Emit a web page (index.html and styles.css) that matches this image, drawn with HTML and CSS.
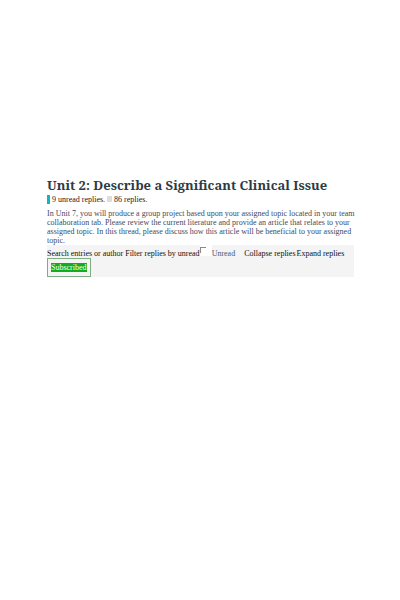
FILE: index.html
```html
<!DOCTYPE html>
<html lang="en">
<head>
    <meta charset="UTF-8">
    <meta name="viewport" content="width=device-width, initial-scale=1.0">
    <title>Unit 2: Describe a Significant Clinical Issue</title>
    <link rel="stylesheet" href="styles.css">
</head>
<body>
    <main class="discussion">
        <h1>Unit 2: Describe a Significant Clinical Issue</h1>
        <div class="reply-counts">
            <span class="badge badge-unread"></span>
            <span class="count-unread">9 unread replies.</span>
            <span class="badge badge-total"></span>
            <span>86 replies.</span>
        </div>
        <p class="message">In Unit 7, you will produce a group project based upon your assigned topic located in your team collaboration tab. Please review the current literature and provide an article that relates to your assigned topic. In this thread, please discuss how this article will be beneficial to your assigned topic.</p>
        <div class="toolbar">
            <div class="filters">
                <span>Search entries or author Filter replies by unread</span>
                <span class="check-cell"><input type="checkbox" id="unread" name="unread"></span>
                <label for="unread">Unread</label>
                <button type="button">Collapse replies</button>
                <button type="button">Expand replies</button>
            </div>
            <button type="button" class="subscribe"><span>Subscribed</span></button>
        </div>
    </main>
</body>
</html>
```

FILE: styles.css
```css
body {
    margin: 0;
    padding: 176px 46px 0 47px;
    background-color: #fff;
    color: #2d3b45;
    font-family: "Liberation Serif", serif;
    font-size: 8px;
    line-height: 9px;
}

h1 {
    margin: 0;
    font-family: "Noto Serif", "Liberation Serif", serif;
    font-size: 13px;
    line-height: 18px;
    white-space: nowrap;
}

.reply-counts {
    display: flex;
    align-items: center;
    height: 10px;
    color: #222;
}

.badge {
    width: 3px;
    height: 9px;
    margin-right: 2px;
    background-color: #18b5b5;
}

.badge-total {
    width: 5px;
    height: 6px;
    background-color: #dedede;
}

.count-unread {
    margin-right: 2px;
}

.message {
    margin: 5px -4px 0 0;
    color: #3c4c62;
}

.toolbar {
    background-color: #f4f4f4;
}

.filters {
    display: flex;
    height: 13px;
    align-items: flex-end;
    white-space: nowrap;
    color: #111;
}

.check-cell {
    align-self: flex-start;
    width: 12px;
    height: 11px;
    background-color: #fff;
}

input[type="checkbox"] {
    display: block;
    appearance: none;
    width: 6px;
    height: 6px;
    margin: 2px 0;
    border-top: 1px solid #8a8a8a;
    border-left: 1px solid #8a8a8a;
}

label {
    margin-right: 9px;
    color: #4a5a70;
}

button {
    margin: 0 1px 0 0;
    padding: 0;
    border: none;
    background: none;
    color: inherit;
    font: inherit;
    cursor: pointer;
}

.subscribe {
    display: block;
    padding: 4px 3px;
    border: 1px solid #7fae84;
}

.subscribe span {
    display: block;
    background-color: #0fae1c;
    color: #fff;
}
```
